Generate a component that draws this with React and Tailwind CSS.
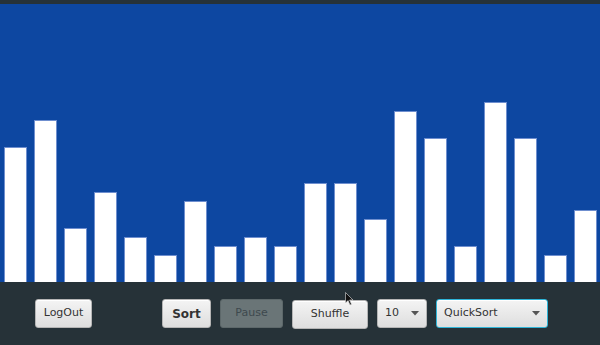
import React from "react";

const values = [15, 18, 6, 10, 5, 3, 9, 4, 5, 4, 11, 11, 7, 19, 16, 4, 20, 16, 3, 8];

const btn =
  "h-[29px] rounded-[3px] border border-[#b5b5b5] bg-gradient-to-b from-[#f4f4f4] to-[#dedede] shadow-[inset_0_1px_0_#ffffff] text-[11px] text-[#333] flex items-center justify-center";

function Arrow() {
  return (
    <svg width="8" height="5" viewBox="0 0 8 5" className="ml-auto">
      <path d="M0 0 L8 0 L4 4.5 Z" fill="#555" />
    </svg>
  );
}

export default function App() {
  return (
    <div
      className="w-[600px] h-[345px] bg-[#263238] flex flex-col relative overflow-hidden"
      style={{ fontFamily: '"DejaVu Sans", sans-serif' }}
    >
      <div className="h-[4px] bg-[#263238]" />
      <div className="h-[278px] bg-[#0d47a1] flex items-end">
        {values.map((v, i) => (
          <div key={i} className="w-[30px] flex justify-center pl-[1px]">
            <div
              className="w-[23px] bg-white border border-[#6f8fcf] border-b-0"
              style={{ height: v * 9 }}
            />
          </div>
        ))}
      </div>
      <div className="flex-1 flex items-start pt-[17px] pl-[35px]">
        <div className={`${btn} w-[57px]`}>LogOut</div>
        <div className={`${btn} w-[49px] ml-[70px] font-bold text-[12px] text-[#222]`}>Sort</div>
        <div className="h-[29px] w-[63px] ml-[9px] rounded-[3px] border border-[#5d686a] bg-[#6a7577] text-[11px] text-[#3e494e] flex items-center justify-center">
          Pause
        </div>
        <div className={`${btn} w-[76px] ml-[9px] mt-[1px]`}>Shuffle</div>
        <div className={`${btn} w-[50px] ml-[9px] !justify-start px-[7px]`}>
          <span>10</span>
          <Arrow />
        </div>
        <div className={`${btn} w-[112px] ml-[9px] !justify-start px-[7px] !border-[#2fb5d8] shadow-[0_0_0_1px_#1f8fb0]`}>
          <span>QuickSort</span>
          <Arrow />
        </div>
      </div>
      <svg className="absolute left-[345px] top-[292px]" width="10" height="14" viewBox="0 0 10 14">
        <path d="M0.5 0.5 L0.5 11 L3 8.5 L5 13 L6.5 12.3 L4.6 8 L8 8 Z" fill="#111" stroke="#ddd" strokeWidth="0.6" />
      </svg>
    </div>
  );
}
